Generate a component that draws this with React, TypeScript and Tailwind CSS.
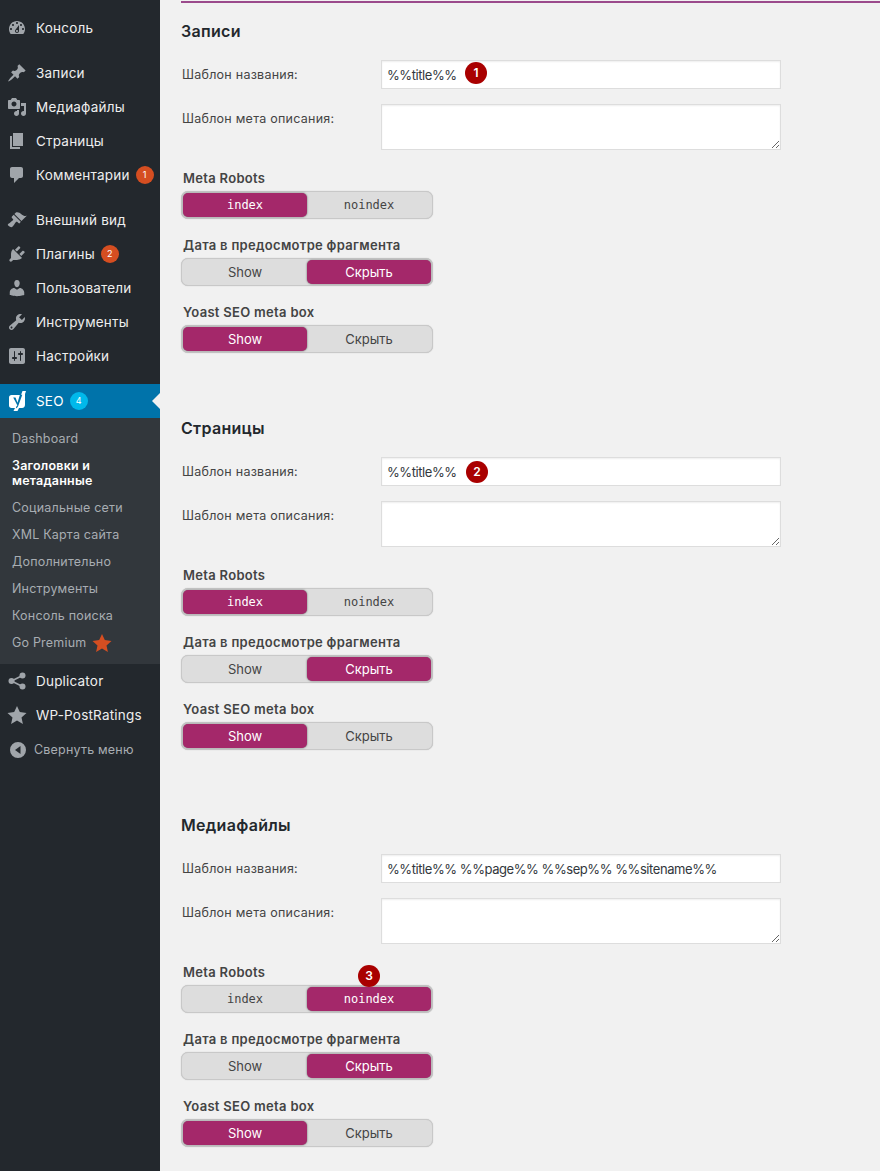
import React from 'react';

const icons: Record<string, React.ReactNode> = {
  dashboard: <path d="M3.76 16h12.48c1.1-1.37 1.76-3.11 1.76-5 0-4.42-3.58-8-8-8s-8 3.58-8 8c0 1.89.66 3.63 1.76 5zM10 4c.55 0 1 .45 1 1s-.45 1-1 1-1-.45-1-1 .45-1 1-1zM6 6c.55 0 1 .45 1 1s-.45 1-1 1-1-.45-1-1 .45-1 1-1zm8 0c.55 0 1 .45 1 1s-.45 1-1 1-1-.45-1-1 .45-1 1-1zm-5.37 5.55L12 7v6c0 1.1-.9 2-2 2s-2-.9-2-2c0-.57.24-1.08.63-1.45zM4 10c.55 0 1 .45 1 1s-.45 1-1 1-1-.45-1-1 .45-1 1-1zm12 0c.55 0 1 .45 1 1s-.45 1-1 1-1-.45-1-1 .45-1 1-1zm-5 3c0-.55-.45-1-1-1s-1 .45-1 1 .45 1 1 1 1-.45 1-1z" fillRule="evenodd" />,
  post: <path d="M10.44 3.02l1.82-1.82 6.36 6.35-1.83 1.82c-1.05-.68-2.48-.57-3.41.36l-.75.75c-.92.93-1.04 2.35-.35 3.41l-1.83 1.82-2.41-2.41-2.8 2.79c-.42.42-3.38 2.71-3.8 2.29s1.86-3.39 2.28-3.81l2.79-2.79L4.1 9.36l1.83-1.82c1.05.69 2.48.57 3.4-.36l.75-.75c.93-.92 1.05-2.35.36-3.41z" />,
  media: <path d="M13 11V4c0-.55-.45-1-1-1h-1.67L9 1H5L3.67 3H2c-.55 0-1 .45-1 1v7c0 .55.45 1 1 1h10c.55 0 1-.45 1-1zM7 4.5c1.38 0 2.5 1.12 2.5 2.5S8.38 9.5 7 9.5 4.5 8.38 4.5 7 5.62 4.5 7 4.5zM14 6h5v10.5c0 1.38-1.12 2.5-2.5 2.5S14 17.88 14 16.5s1.12-2.5 2.5-2.5c.17 0 .34.02.5.05V9h-3V6zm-4 8.05V13h2v3.5c0 1.38-1.12 2.5-2.5 2.5S7 17.88 7 16.5 8.12 14 9.5 14c.17 0 .34.02.5.05z" fillRule="evenodd" />,
  page: <path d="M6 15V2h10v13H6zm-1 1h8v2H3V5h2v11z" />,
  comments: <path d="M5 2h9c1.1 0 2 .9 2 2v7c0 1.1-.9 2-2 2h-2l-5 5v-5H5c-1.1 0-2-.9-2-2V4c0-1.1.9-2 2-2z" />,
  appearance: <path d="M14.48 11.06L7.41 3.99l1.5-1.5c.5-.56 2.3-.47 3.51.32 1.21.8 1.43 1.28 2.91 2.1 1.18.64 2.45 1.26 4.45.85zm-.71.71L6.7 4.7 4.93 6.47c-.39.39-.39 1.02 0 1.41l1.06 1.06c.39.39.39 1.03 0 1.42-.6.6-1.43 1.11-2.21 1.69-.35.26-.7.53-1.01.84C1.43 13.23.4 14.42.91 15.13c.51.71 2.55 2.05 3.5 2.05.65-.01 1.75-1 3-3 .47-.72.98-1.54 1.59-2.12.39-.39 1.03-.39 1.42 0l1.06 1.06c.39.39 1.02.39 1.41 0z" />,
  plugins: <path d="M13.11 4.36L9.87 7.6 8 5.73l3.24-3.24c.35-.34 1.05-.2 1.56.32.52.51.66 1.21.31 1.55zm-8 1.77l.91-1.12 9.01 9.01-1.19.84c-.71.71-2.63 1.16-3.82 1.16H6.14L4.9 17.26c-.59.59-1.54.59-2.12 0-.59-.58-.59-1.53 0-2.12l1.24-1.24v-3.88c0-1.13.4-3.19 1.09-3.89zm7.26 3.97l3.24-3.24c.34-.35 1.04-.21 1.55.31.52.51.66 1.21.31 1.55l-3.24 3.25z" />,
  users: <path d="M10 9.25c-2.27 0-2.73-3.44-2.73-3.44C7 4.02 7.82 2 9.97 2c2.16 0 2.98 2.02 2.71 3.81 0 0-.41 3.44-2.68 3.44zm0 2.57L12.72 10c2.39 0 4.52 2.33 4.52 4.53v2.49s-3.65 1.13-7.24 1.13c-3.65 0-7.24-1.13-7.24-1.13v-2.49c0-2.25 1.94-4.48 4.47-4.48z" />,
  tools: <path d="M16.68 9.77c-1.34 1.34-3.3 1.67-4.95.99l-5.41 6.52c-.99.99-2.59.99-3.58 0s-.99-2.59 0-3.57l6.52-5.42c-.68-1.65-.35-3.61.99-4.95 1.28-1.28 3.12-1.62 4.72-1.06l-2.89 2.89 2.82 2.82 2.86-2.87c.53 1.58.18 3.39-1.08 4.65zM3.81 16.21c.4.39 1.04.39 1.43 0 .4-.4.4-1.04 0-1.43-.39-.4-1.03-.4-1.43 0-.39.39-.39 1.03 0 1.43z" fillRule="evenodd" />,
  settings: <path d="M18 16V4c0-1.1-.9-2-2-2H4c-1.1 0-2 .9-2 2v12c0 1.1.9 2 2 2h12c1.1 0 2-.9 2-2zM8 11h1c.55 0 1 .45 1 1s-.45 1-1 1H8v1.5c0 .28-.22.5-.5.5s-.5-.22-.5-.5V13H6c-.55 0-1-.45-1-1s.45-1 1-1h1V5.5c0-.28.22-.5.5-.5s.5.22.5.5V11zm5-2h-1c-.55 0-1-.45-1-1s.45-1 1-1h1V5.5c0-.28.22-.5.5-.5s.5.22.5.5V7h1c.55 0 1 .45 1 1s-.45 1-1 1h-1v5.5c0 .28-.22.5-.5.5s-.5-.22-.5-.5V9z" fillRule="evenodd" />,
  share: (
    <g>
      <circle cx="15.5" cy="4.5" r="3" />
      <circle cx="4.5" cy="10" r="3" />
      <circle cx="15.5" cy="15.5" r="3" />
      <path d="M15.5 4.5L4.5 10l11 5.5" fill="none" stroke="currentColor" strokeWidth="1.6" />
    </g>
  ),
  star: <path d="M10 1l2.8 6.1 6.7.8-5 4.5 1.4 6.6L10 15.6 4.1 19l1.4-6.6-5-4.5 6.7-.8z" />,
};

function MenuIcon({ name }: { name: string }) {
  return (
    <svg viewBox="0 0 20 20" fill="currentColor" className="w-5 h-5 text-[#a0a5aa] shrink-0">
      {icons[name]}
    </svg>
  );
}

function MenuItem({ icon, label, count }: { icon: string; label: string; count?: number }) {
  return (
    <div className="h-[34px] flex items-center pl-[7px]">
      <MenuIcon name={icon} />
      <span className="ml-[9px] text-[13.5px] text-[#eeeeee] tracking-[0.2px]">{label}</span>
      {count !== undefined && (
        <span className="ml-[6px] w-[18px] h-[18px] rounded-full bg-[#d54e21] text-white text-[9px] flex items-center justify-center">{count}</span>
      )}
    </div>
  );
}

function SubItem({ children, active }: { children: React.ReactNode; active?: boolean }) {
  return (
    <div className={`px-3 py-[6px] text-[12.5px] leading-[15px] tracking-[0.2px] ${active ? 'text-white font-semibold' : 'text-[#a8adb2]'}`}>
      {children}
    </div>
  );
}

function Sidebar() {
  return (
    <aside className="w-40 shrink-0 bg-[#23282d]">
      <div className="pt-[11px]">
        <MenuItem icon="dashboard" label="Консоль" />
      </div>
      <div className="mt-[11px]">
        <MenuItem icon="post" label="Записи" />
        <MenuItem icon="media" label="Медиафайлы" />
        <MenuItem icon="page" label="Страницы" />
        <MenuItem icon="comments" label="Комментарии" count={1} />
      </div>
      <div className="mt-[11px]">
        <MenuItem icon="appearance" label="Внешний вид" />
        <MenuItem icon="plugins" label="Плагины" count={2} />
        <MenuItem icon="users" label="Пользователи" />
        <MenuItem icon="tools" label="Инструменты" />
        <MenuItem icon="settings" label="Настройки" />
      </div>
      <div className="mt-[11px] h-[34px] bg-[#0073aa] relative flex items-center pl-[8px]">
        <svg viewBox="0 0 20 22" className="w-5 h-[22px] shrink-0">
          <path d="M3.5 5H13l1.5-4h3.5l-1 3v10.5c0 2-1 3.5-3 3.5h-3l-1.5 3H5.5l1.5-3H3.5C2 18 1 17 1 15.5V7.5C1 6 2 5 3.5 5z" fill="#ffffff" />
          <path d="M5.2 7.5h2.3l2 5.2 2.4-8h2.4L10.2 16c-.5 1.3-1.2 2-2.4 2.4l.5-1.9c.6-.2.9-.7 1-1.3z" fill="#0073aa" />
        </svg>
        <span className="ml-2 text-[13.5px] text-white tracking-[0.2px]">SEO</span>
        <span className="ml-[6px] w-[18px] h-[18px] rounded-full bg-[#00b9eb] text-white text-[9px] flex items-center justify-center">4</span>
        <span className="absolute right-0 top-[9px] border-y-8 border-r-8 border-y-transparent border-r-[#f1f1f1]" />
      </div>
      <div className="bg-[#32373c] h-[246px] pt-[7px]">
        <SubItem>Dashboard</SubItem>
        <SubItem active>Заголовки и<br />метаданные</SubItem>
        <SubItem>Социальные сети</SubItem>
        <SubItem>XML Карта сайта</SubItem>
        <SubItem>Дополнительно</SubItem>
        <SubItem>Инструменты</SubItem>
        <SubItem>Консоль поиска</SubItem>
        <div className="px-3 h-[28px] flex items-center text-[12.5px] tracking-[0.2px] text-[#a8adb2]">
          Go Premium
          <svg viewBox="0 0 20 20" fill="#d54e21" className="w-5 h-5 ml-[6px]">{icons.star}</svg>
        </div>
      </div>
      <MenuItem icon="share" label="Duplicator" />
      <MenuItem icon="star" label="WP-PostRatings" />
      <div className="h-[34px] pt-[2px] flex items-center pl-[10px]">
        <svg viewBox="0 0 16 16" className="w-4 h-4 shrink-0 text-[#a0a5aa]" fill="currentColor">
          <path d="M8 0a8 8 0 1 1 0 16A8 8 0 0 1 8 0zm2.5 4L5 8l5.5 4z" fillRule="evenodd" />
        </svg>
        <span className="ml-2 text-[12.5px] tracking-[0.2px] text-[#a8adb2]">Свернуть меню</span>
      </div>
    </aside>
  );
}

function Marker({ n, className }: { n: number; className: string }) {
  return (
    <span className={`absolute w-[22px] h-[22px] rounded-full bg-[#a90000] text-white text-[12px] font-semibold flex items-center justify-center ${className}`}>
      {n}
    </span>
  );
}

function Toggle({ left, right, active, mono }: { left: string; right: string; active: 'left' | 'right'; mono?: boolean }) {
  const side = (label: string, on: boolean) => (
    <div
      className={`flex-1 flex items-center justify-center rounded-[5px] ${mono ? "font-['DejaVu_Sans_Mono',monospace] text-[12px]" : 'pt-px text-[13px]'} ${on ? 'bg-[#a4286a] text-white shadow-[0_0_2px_rgba(0,0,0,0.6)]' : 'text-[#444444]'}`}
    >
      {label}
    </div>
  );
  return (
    <div className="w-[252px] h-[28px] p-px flex rounded-[7px] bg-[#dddddd] border border-[#c8c8c8] shadow-[0_0_1px_rgba(0,0,0,0.25)]">
      {side(left, active === 'left')}
      {side(right, active === 'right')}
    </div>
  );
}

function ToggleRow({ title, children }: { title: string; children: React.ReactNode }) {
  return (
    <div>
      <div className="h-[16px] pl-[2px] text-[13px] leading-[17px] tracking-[0.3px] font-semibold text-[#444444]">{title}</div>
      <div className="mt-[5px]">{children}</div>
    </div>
  );
}

function Section({
  title,
  value,
  marker,
  robots,
}: {
  title: string;
  value: string;
  marker?: React.ReactNode;
  robots: 'left' | 'right';
}) {
  const labelCls = 'w-[200px] pl-px pt-[7px] text-[12.5px] leading-[16px] tracking-[0.25px] text-[#444444]';
  return (
    <section className="h-[397px] relative">
      <h2 className="h-[20px] text-[16px] leading-[20px] font-semibold tracking-[0.3px] text-[#23282d]">{title}</h2>
      <div className="mt-[19px] flex">
        <label className={labelCls}>Шаблон названия:</label>
        <input
          readOnly
          value={value}
          className="w-[400px] h-[29px] px-[5px] bg-white border border-[#dddddd] shadow-[inset_0_1px_2px_rgba(0,0,0,0.07)] text-[13px] tracking-[-0.43px] text-[#32373c] outline-none"
        />
      </div>
      <div className="mt-[15px] flex">
        <label className={labelCls}>Шаблон мета описания:</label>
        <textarea readOnly className="block w-[400px] h-[46px] bg-white border border-[#dddddd] shadow-[inset_0_1px_2px_rgba(0,0,0,0.07)] outline-none" />
      </div>
      <div className="mt-5">
        <ToggleRow title="Meta Robots">
          <Toggle left="index" right="noindex" active={robots} mono />
        </ToggleRow>
      </div>
      <div className="mt-[18px]">
        <ToggleRow title="Дата в предосмотре фрагмента">
          <Toggle left="Show" right="Скрыть" active="right" />
        </ToggleRow>
      </div>
      <div className="mt-[18px]">
        <ToggleRow title="Yoast SEO meta box">
          <Toggle left="Show" right="Скрыть" active="left" />
        </ToggleRow>
      </div>
      {marker}
    </section>
  );
}

export default function App() {
  return (
    <div className="flex w-[880px] h-[1171px] overflow-hidden bg-[#f1f1f1] font-['Inter','Noto_Sans',sans-serif]">
      <Sidebar />
      <main className="flex-1 pl-[21px]">
        <div className="h-[2px] mt-px bg-[#9b4a8c]" />
        <div className="pt-[18px]">
          <Section title="Записи" value="%%title%%" robots="left" marker={<Marker n={1} className="left-[284px] top-[41px]" />} />
          <Section title="Страницы" value="%%title%%" robots="left" marker={<Marker n={2} className="left-[285px] top-[43px]" />} />
          <Section
            title="Медиафайлы"
            value="%%title%% %%page%% %%sep%% %%sitename%%"
            robots="right"
            marker={<Marker n={3} className="left-[177px] top-[150px]" />}
          />
        </div>
      </main>
    </div>
  );
}
